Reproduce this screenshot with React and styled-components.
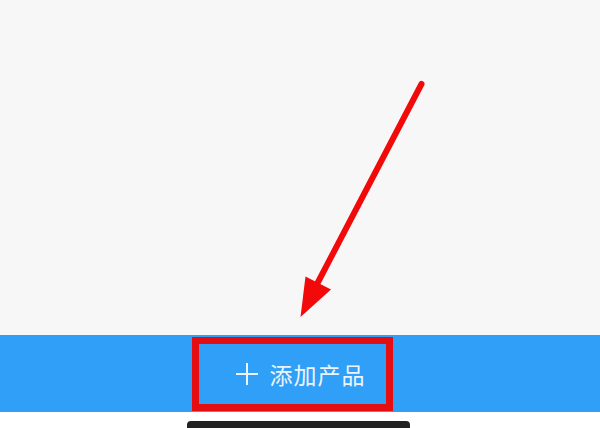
import React from "react";
import styled, { createGlobalStyle } from "styled-components";

const Global = createGlobalStyle`
  html, body { margin: 0; padding: 0; background: #ffffff; }
  body { font-family: "Noto Sans CJK SC", "Noto Sans", sans-serif; }
`;

const Screen = styled.div`
  position: relative;
  width: 600px;
  height: 428px;
  overflow: hidden;
  display: flex;
  flex-direction: column;
  background: #ffffff;
`;

const Content = styled.div`
  height: 335px;
  background: #f7f7f7;
`;

const BottomBar = styled.div`
  height: 77px;
  background: #309ff7;
  display: flex;
  align-items: center;
  justify-content: center;
`;

const AddButton = styled.button`
  border: none;
  background: transparent;
  color: #eef4fb;
  display: flex;
  align-items: center;
  gap: 11px;
  padding: 0;
  margin-left: 0;
  font-family: "Noto Sans CJK SC", "Noto Sans", sans-serif;
  font-size: 23px;
  letter-spacing: 1px;
  cursor: pointer;
`;

const HomeArea = styled.div`
  flex: 1;
  display: flex;
  justify-content: center;
  align-items: flex-end;
`;

const HomeIndicator = styled.div`
  width: 223px;
  height: 7px;
  margin-left: -3px;
  border-radius: 4px 4px 0 0;
  background: #222222;
`;

const Highlight = styled.div`
  position: absolute;
  left: 192px;
  top: 337px;
  width: 187px;
  height: 60px;
  border: 7px solid #e30d12;
`;

const Arrow = styled.svg`
  position: absolute;
  left: 0;
  top: 0;
  pointer-events: none;
`;

export default function App() {
  return (
    <>
      <Global />
      <Screen>
        <Content />
        <BottomBar>
          <AddButton>
            <svg width="24" height="24" viewBox="0 0 24 24">
              <path d="M12 1v22M1 12h22" stroke="#eef4fb" strokeWidth="2" />
            </svg>
            添加产品
          </AddButton>
        </BottomBar>
        <HomeArea>
          <HomeIndicator />
        </HomeArea>
        <Highlight />
        <Arrow width="600" height="428" viewBox="0 0 600 428">
          <line x1="421.5" y1="84" x2="316" y2="286" stroke="#f20a0a" strokeWidth="6" strokeLinecap="round" />
          <polygon points="300.5,317 305.5,276.5 331,289.5" fill="#f20a0a" />
        </Arrow>
      </Screen>
    </>
  );
}
